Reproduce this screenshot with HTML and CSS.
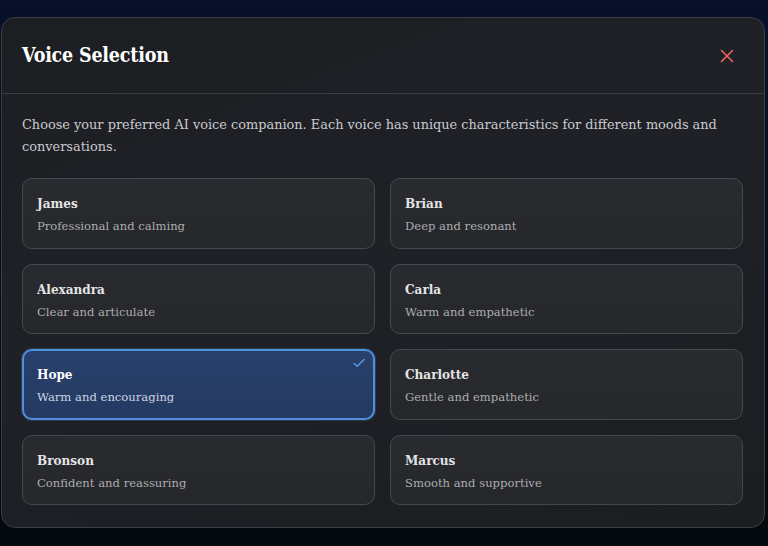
FILE: index.html
```html
<!DOCTYPE html>
<html lang="en">
<head>
<meta charset="utf-8">
<title>Voice Selection</title>
<link rel="stylesheet" href="styles.css">
</head>
<body>
<div class="modal">
  <div class="modal-header">
    <h2 class="modal-title">Voice Selection</h2>
    <button class="close-btn" aria-label="Close">
      <svg width="14" height="14" viewBox="0 0 14 14"><path d="M1.5 1.5 L12.5 12.5 M12.5 1.5 L1.5 12.5" stroke="#f06262" stroke-width="1.6" stroke-linecap="round"/></svg>
    </button>
  </div>
  <div class="modal-body">
    <p class="intro">Choose your preferred AI voice companion. Each voice has unique characteristics for different moods and conversations.</p>
    <div class="voice-grid">
      <div class="voice-card"><div class="voice-name">James</div><div class="voice-desc">Professional and calming</div></div>
      <div class="voice-card"><div class="voice-name">Brian</div><div class="voice-desc">Deep and resonant</div></div>
      <div class="voice-card"><div class="voice-name">Alexandra</div><div class="voice-desc">Clear and articulate</div></div>
      <div class="voice-card"><div class="voice-name">Carla</div><div class="voice-desc">Warm and empathetic</div></div>
      <div class="voice-card selected">
        <div class="voice-name">Hope</div><div class="voice-desc">Warm and encouraging</div>
        <svg class="check" width="12" height="10" viewBox="0 0 12 10"><path d="M1 5.5 L4.2 8.3 L11 1.5" fill="none" stroke="#5b9be8" stroke-width="1.4" stroke-linecap="round" stroke-linejoin="round"/></svg>
      </div>
      <div class="voice-card"><div class="voice-name">Charlotte</div><div class="voice-desc">Gentle and empathetic</div></div>
      <div class="voice-card"><div class="voice-name">Bronson</div><div class="voice-desc">Confident and reassuring</div></div>
      <div class="voice-card"><div class="voice-name">Marcus</div><div class="voice-desc">Smooth and supportive</div></div>
    </div>
  </div>
</div>
</body>
</html>
```
FILE: styles.css
```css
html, body {
  margin: 0;
  height: 100%;
}
body {
  background: linear-gradient(180deg, #08102a 0%, #060d1c 40%, #03090c 100%);
  font-family: "DejaVu Serif", "Liberation Serif", serif;
  overflow: hidden;
}
.modal {
  box-sizing: border-box;
  width: 764px;
  margin: 17px 0 0 1px;
  border: 1px solid #3b3e45;
  border-radius: 14px;
  background: linear-gradient(160deg, #1d1e22 0%, #1f2127 45%, #1c1d21 100%);
  overflow: hidden;
}
.modal-header {
  height: 75px;
  display: flex;
  align-items: center;
  justify-content: space-between;
  padding: 0 30px 0 20px;
  border-bottom: 1px solid #3a3c42;
}
.modal-title {
  margin: 0 0 1px 0;
  font-family: "DejaVu Serif Condensed", "DejaVu Serif", serif;
  font-size: 19.5px;
  font-weight: bold;
  color: #ffffff;
  letter-spacing: -0.2px;
}
.close-btn {
  background: none;
  border: 0;
  padding: 0;
  width: 14px;
  height: 14px;
  display: flex;
  cursor: pointer;
}
.modal-body {
  padding: 20px 21px 22px 20px;
}
.intro {
  margin: 0 0 20px 0;
  font-size: 12.9px;
  line-height: 22px;
  color: #c9cace;
}
.voice-grid {
  display: grid;
  grid-template-columns: 1fr 1fr;
  column-gap: 15px;
  row-gap: 15px;
}
.voice-card {
  position: relative;
  box-sizing: border-box;
  height: 70.5px;
  padding: 14px 14px 0 14px;
  border: 1px solid #46484e;
  border-radius: 10px;
  background: linear-gradient(180deg, #2a2b30 0%, #25272a 100%);
}
.voice-name {
  font-family: "DejaVu Serif Condensed", "DejaVu Serif", serif;
  font-size: 13.4px;
  font-weight: bold;
  color: #e4e4e6;
  line-height: 20px;
}
.voice-desc {
  margin-top: 5px;
  font-size: 11.6px;
  color: #acadb1;
  line-height: 17px;
}
.voice-card.selected {
  border: 2px solid #4f8fdc;
  padding: 13px 13px 0 13px;
  background: linear-gradient(180deg, #28406b 0%, #243a62 100%);
  box-shadow: 0 0 0 1px rgba(79, 143, 220, 0.25);
}
.voice-card.selected .voice-name { color: #ffffff; }
.voice-card.selected .voice-desc { color: #cdd5e4; }
.check {
  position: absolute;
  top: 7px;
  right: 8px;
}
```
